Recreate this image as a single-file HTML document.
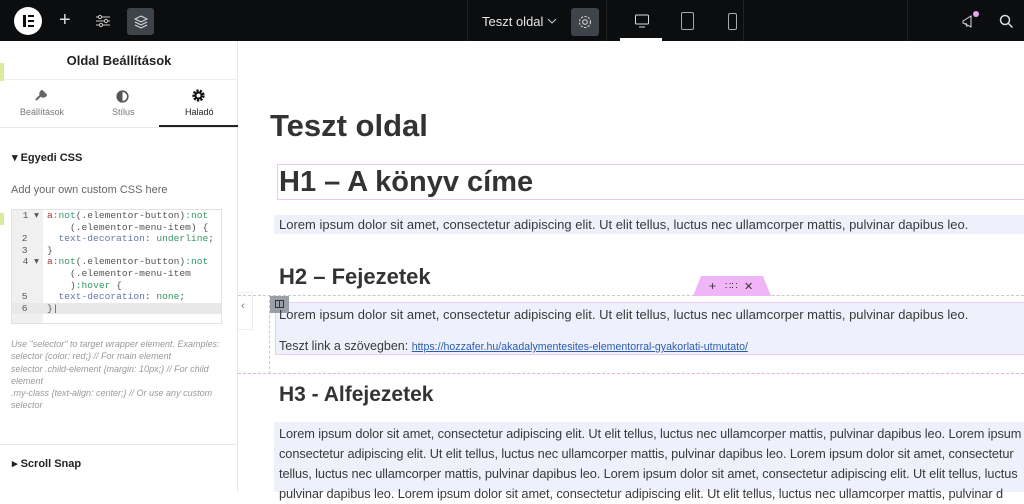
<!DOCTYPE html>
<html><head><meta charset="utf-8"><style>
*{margin:0;padding:0;box-sizing:border-box}
body{width:1024px;height:492px;overflow:hidden;background:#fff;font-family:"Liberation Sans",sans-serif;position:relative;color:#333}
.top{position:absolute;left:0;top:0;width:1024px;height:41px;background:#0c0d0e}
.abs{position:absolute}
.panel{position:absolute;left:0;top:41px;width:238px;height:451px;background:#fff;border-right:1px solid #e6e8ea}
.c{position:absolute;font-size:13px;white-space:nowrap}
.p{font-family:"Liberation Sans",sans-serif;color:#3a3a3a}
.code{font-family:"Liberation Mono",monospace;font-size:9.6px;line-height:11.6px}
</style></head><body>
<div class="top">
  <div class="abs" style="left:14px;top:7px;width:28px;height:28px;border-radius:50%;background:#fff"></div>
  <div class="abs" style="left:23px;top:15px;width:3px;height:12px;background:#0c0d0e"></div>
  <div class="abs" style="left:28px;top:15px;width:6px;height:2px;background:#0c0d0e"></div>
  <div class="abs" style="left:28px;top:20px;width:6px;height:2px;background:#0c0d0e"></div>
  <div class="abs" style="left:28px;top:25px;width:6px;height:2px;background:#0c0d0e"></div>
  <div class="abs" style="left:59px;top:9px;color:#ddd;font-size:20px">+</div>
  <svg class="abs" style="left:95px;top:13px" width="16" height="16" stroke="#ccc" fill="none"><path d="M1 4h14M1 8h14M1 12h14"/><circle cx="5" cy="4" r="1.6" fill="#0c0d0e"/><circle cx="11" cy="8" r="1.6" fill="#0c0d0e"/><circle cx="6" cy="12" r="1.6" fill="#0c0d0e"/></svg>
  <div class="abs" style="left:127px;top:8px;width:27px;height:27px;border-radius:3px;background:#3f444b"></div>
  <svg class="abs" style="left:133px;top:14px" width="16" height="16" stroke="#ddd" fill="none"><path d="M8 2l6 3-6 3-6-3z M2 8l6 3 6-3 M2 11l6 3 6-3"/></svg>
  <div class="abs" style="left:467px;top:0;width:1px;height:41px;background:#222"></div>
  <div class="c" style="left:482px;top:14px;color:#e6e6e6;font-size:13px">Teszt oldal</div>
  <svg class="abs" style="left:547px;top:17px" width="10" height="8" stroke="#ccc" fill="none"><path d="M1 2l4 4 4-4"/></svg>
  <div class="abs" style="left:571px;top:8px;width:28px;height:28px;border-radius:3px;background:#3f444b"></div>
  <svg class="abs" style="left:578px;top:15px" width="14" height="14" stroke="#ddd" fill="none"><circle cx="7" cy="7" r="2.3"/><circle cx="7" cy="7" r="5.5" stroke-dasharray="2.2 1.4"/></svg>
  <div class="abs" style="left:606px;top:0;width:1px;height:41px;background:#222"></div>
  <svg class="abs" style="left:634px;top:13px" width="16" height="16" stroke="#ddd" fill="none"><rect x="1.5" y="2" width="13" height="9" rx="1"/><path d="M5 14h6"/></svg>
  <div class="abs" style="left:620px;top:38px;width:42px;height:3px;background:#fff"></div>
  <div class="abs" style="left:681px;top:12px;width:13px;height:18px;border:1.5px solid #aaa;border-radius:2px"></div>
  <div class="abs" style="left:728px;top:13px;width:9px;height:17px;border:1.5px solid #aaa;border-radius:2px"></div>
  <div class="abs" style="left:743px;top:0;width:1px;height:41px;background:#222"></div>
  <div class="abs" style="left:907px;top:0;width:1px;height:41px;background:#222"></div>
  <svg class="abs" style="left:961px;top:13px" width="16" height="16" stroke="#ddd" fill="none"><path d="M2 8l8-5v11L2 10z M5 10l1 4"/></svg>
  <div class="abs" style="left:973px;top:11px;width:6px;height:6px;border-radius:50%;background:#e7a4f0"></div>
  <svg class="abs" style="left:999px;top:14px" width="15" height="15" stroke="#ddd" fill="none" stroke-width="1.5"><circle cx="6" cy="6" r="4.5"/><path d="M9.5 9.5l4 4"/></svg>
</div>

<div class="panel">
  <div class="abs" style="left:0;top:0;width:238px;height:39px;border-bottom:1px solid #eee"></div>
  <div class="c" style="left:0;width:238px;text-align:center;top:12px;font-weight:bold;color:#222;font-size:13px">Oldal Beállítások</div>
  <div class="abs" style="left:0;top:22px;width:4px;height:18px;background:#d9ec9c"></div>
  <div class="abs" style="left:0;top:86px;width:238px;height:1px;background:#e6e6e6"></div>
  <div class="abs" style="left:159px;top:84px;width:79px;height:2px;background:#222"></div>
  <svg class="abs" style="left:34px;top:48px" width="13" height="13" fill="#666"><path d="M2 11l5-5 M8 2a3 3 0 104 4l-2-2z" stroke="#666" stroke-width="2"/></svg>
  <div class="c" style="left:20px;top:66px;font-size:9px;color:#777">Beállítások</div>
  <svg class="abs" style="left:116px;top:49px" width="13" height="13"><circle cx="6.5" cy="6.5" r="5.3" fill="none" stroke="#555" stroke-width="1.6"/><path d="M6.5 1.2a5.3 5.3 0 000 10.6z" fill="#555"/></svg>
  <div class="c" style="left:112px;top:66px;font-size:9px;color:#777">Stílus</div>
  <svg class="abs" style="left:192px;top:48px" width="13" height="13"><circle cx="6.5" cy="6.5" r="4.8" fill="none" stroke="#111" stroke-width="2.6" stroke-dasharray="2.2 1.2"/><circle cx="6.5" cy="6.5" r="3" fill="none" stroke="#111" stroke-width="2"/></svg>
  <div class="c" style="left:185px;top:66px;font-size:9px;color:#222">Haladó</div>
  <div class="c" style="left:12px;top:110px;font-size:11px;font-weight:bold;color:#222">▾ Egyedi CSS</div>
  <div class="c" style="left:11px;top:143px;font-size:11px;color:#666">Add your own custom CSS here</div>
  <div class="abs" style="left:0;top:172px;width:4px;height:12px;background:#d9ec9c"></div>
  <div class="abs" style="left:11px;top:168px;width:211px;height:115px;border:1px solid #e2e2e2;background:#fff"></div>
  <div class="abs" style="left:12px;top:169px;width:31px;height:113px;background:#f0f0f0"></div>
  <div class="abs" style="left:12px;top:262px;width:209px;height:11px;background:#e8e8e8"></div>
  <div class="abs code" style="left:12px;top:169px;width:31px;color:#555;text-align:right;padding-right:4px">1 ▾<br>&nbsp;<br>2&nbsp;&nbsp;<br>3&nbsp;&nbsp;<br>4 ▾<br>&nbsp;<br>&nbsp;<br>5&nbsp;&nbsp;<br>6&nbsp;&nbsp;</div>
  <div class="abs code" style="left:47px;top:169px;color:#555;white-space:pre"><span style="color:#a33">a</span><span style="color:#396">:not</span>(.elementor-button)<span style="color:#396">:not</span>
    (.elementor-menu-item) {
  <span style="color:#67a">text-decoration</span>: <span style="color:#396">underline</span>;
}
<span style="color:#a33">a</span><span style="color:#396">:not</span>(.elementor-button)<span style="color:#396">:not</span>
    (.elementor-menu-item
    )<span style="color:#396">:hover</span> {
  <span style="color:#67a">text-decoration</span>: <span style="color:#396">none</span>;
}|</div>
  <div class="abs" style="left:11px;top:297px;font-size:9px;line-height:12.3px;color:#999;font-style:italic;width:220px">Use "selector" to target wrapper element. Examples:<br>selector {color: red;} // For main element<br>selector .child-element {margin: 10px;} // For child<br>element<br>.my-class {text-align: center;} // Or use any custom<br>selector</div>
  <div class="abs" style="left:0;top:403px;width:238px;height:1px;background:#e6e6e6"></div>
  <div class="c" style="left:12px;top:416px;font-size:11px;font-weight:bold;color:#222">▸ Scroll Snap</div>
</div>

<div class="abs" style="left:238px;top:292px;width:15px;height:38px;background:#fff;border:1px solid #eee;border-left:none;color:#777;font-size:11px;padding:7px 0 0 3px">‹</div>

<div class="c p" style="left:270px;top:108px;font-size:31px;font-weight:bold;color:#333">Teszt oldal</div>
<div class="abs" style="left:277px;top:164px;width:760px;height:36px;border:1px solid #edc8f0"></div>
<div class="c p" style="left:279px;top:166px;font-size:29px;font-weight:bold;color:#333">H1 – A könyv címe</div>
<div class="abs" style="left:274px;top:215px;width:750px;height:19px;background:#eef0fb"></div>
<div class="c p" style="left:279px;top:217px;font-size:13px">Lorem ipsum dolor sit amet, consectetur adipiscing elit. Ut elit tellus, luctus nec ullamcorper mattis, pulvinar dapibus leo.</div>
<div class="c p" style="left:279px;top:264px;font-size:22px;font-weight:bold;color:#333">H2 – Fejezetek</div>
<div class="abs" style="left:238px;top:295px;width:786px;height:79px;border-top:1px dashed #c9c9c9;border-bottom:1px dashed #e0b0e6"></div>
<div class="abs" style="left:269px;top:295px;width:1px;height:79px;border-left:1px dashed #c9c9c9"></div>
<div class="abs" style="left:275px;top:302px;width:760px;height:53px;background:#eef0fb;border:1px solid #eccbf0"></div>
<div class="abs" style="left:270px;top:296px;width:19px;height:17px;background:#99a0a8"></div>
<div class="abs" style="left:275px;top:300px;width:9px;height:8px;border:1.5px solid #333"></div>
<div class="abs" style="left:279px;top:301px;width:1px;height:7px;background:#333"></div>
<svg class="abs" style="left:693px;top:276px" width="78" height="20"><path d="M8 0h62l8 20H0z" fill="#efb5f6"/><text x="16" y="14" font-size="12" fill="#333" font-family="Liberation Sans">+</text><text x="32" y="13" font-size="10" fill="#333" font-family="Liberation Sans">∷∷</text><text x="51" y="14" font-size="11" fill="#333" font-family="Liberation Sans">✕</text></svg>
<div class="c p" style="left:279px;top:307px;font-size:13px">Lorem ipsum dolor sit amet, consectetur adipiscing elit. Ut elit tellus, luctus nec ullamcorper mattis, pulvinar dapibus leo.</div>
<div class="c p" style="left:279px;top:339px;font-size:12.5px">Teszt link a szövegben: <span style="font-size:10.6px;color:#2a5db0;text-decoration:underline">https://hozzafer.hu/akadalymentesites-elementorral-gyakorlati-utmutato/</span></div>
<div class="c p" style="left:279px;top:383px;font-size:21px;font-weight:bold;color:#333">H3 - Alfejezetek</div>
<div class="abs" style="left:274px;top:422px;width:750px;height:70px;background:#eef0fb"></div>
<div class="abs p" style="left:279px;top:424px;font-size:12.8px;line-height:20px;white-space:nowrap;letter-spacing:-0.1px">Lorem ipsum dolor sit amet, consectetur adipiscing elit. Ut elit tellus, luctus nec ullamcorper mattis, pulvinar dapibus leo. Lorem ipsum<br>consectetur adipiscing elit. Ut elit tellus, luctus nec ullamcorper mattis, pulvinar dapibus leo. Lorem ipsum dolor sit amet, consectetur<br>tellus, luctus nec ullamcorper mattis, pulvinar dapibus leo. Lorem ipsum dolor sit amet, consectetur adipiscing elit. Ut elit tellus, luctus<br>pulvinar dapibus leo. Lorem ipsum dolor sit amet, consectetur adipiscing elit. Ut elit tellus, luctus nec ullamcorper mattis, pulvinar d</div>
</body></html>
